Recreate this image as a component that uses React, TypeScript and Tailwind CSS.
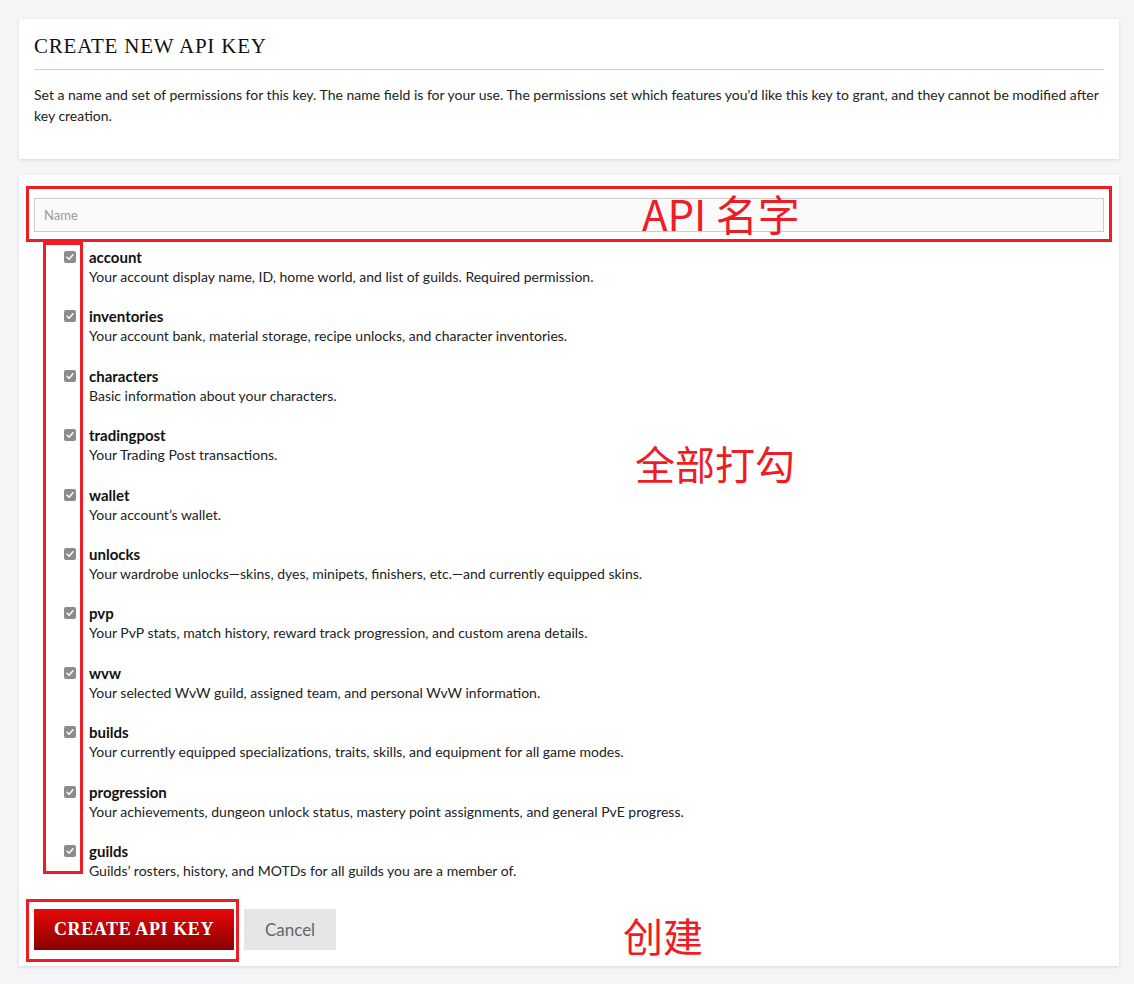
import * as React from "react";

const permissions = [
  { name: "account", desc: "Your account display name, ID, home world, and list of guilds. Required permission." },
  { name: "inventories", desc: "Your account bank, material storage, recipe unlocks, and character inventories." },
  { name: "characters", desc: "Basic information about your characters." },
  { name: "tradingpost", desc: "Your Trading Post transactions." },
  { name: "wallet", desc: "Your account\u2019s wallet." },
  { name: "unlocks", desc: "Your wardrobe unlocks\u2014skins, dyes, minipets, finishers, etc.\u2014and currently equipped skins." },
  { name: "pvp", desc: "Your PvP stats, match history, reward track progression, and custom arena details." },
  { name: "wvw", desc: "Your selected WvW guild, assigned team, and personal WvW information." },
  { name: "builds", desc: "Your currently equipped specializations, traits, skills, and equipment for all game modes." },
  { name: "progression", desc: "Your achievements, dungeon unlock status, mastery point assignments, and general PvE progress." },
  { name: "guilds", desc: "Guilds\u2019 rosters, history, and MOTDs for all guilds you are a member of." },
];

function Check() {
  return (
    <span className="mt-[4px] flex h-[12px] w-[12px] shrink-0 items-center justify-center rounded-[2px] bg-[#8c8c8c]">
      <svg viewBox="0 0 12 12" className="h-[10px] w-[10px]">
        <path d="M2.5 6.2 L5 8.6 L9.5 3.4" fill="none" stroke="#fff" strokeWidth="1.8" strokeLinecap="round" strokeLinejoin="round" />
      </svg>
    </span>
  );
}

export default function App() {
  const cjk = { fontFamily: '"Noto Sans CJK SC", "Liberation Sans", sans-serif' };

  return (
    <div className="relative min-h-[984px] bg-[#f4f5f6] pl-[19px] pr-[15px] pt-[19px] font-['Lato',sans-serif] text-[#1a1a1a]">
      <div className="bg-white px-[15px] pt-[14px] pb-[33px] shadow-[0_1px_3px_rgba(0,0,0,0.12)]">
        <h1 className="border-b border-[#cfcfcf] pb-[10px] font-['Liberation_Serif',serif] text-[21px] leading-[26px] tracking-[0.8px] text-[#111]">
          CREATE NEW API KEY
        </h1>
        <p className="mt-[14px] text-[14px] leading-[21px] text-[#222]">
          Set a name and set of permissions for this key. The name field is for your use. The permissions set which features you'd like this key to grant, and they cannot be modified after key creation.
        </p>
      </div>

      <div className="mt-[16px] bg-white px-[15px] pt-[23px] pb-[16px] shadow-[0_1px_3px_rgba(0,0,0,0.12)]">
        <input
          type="text"
          placeholder="Name"
          className="block h-[34px] w-full border border-[#cccccc] bg-[#fafafa] px-[9px] text-[13px] text-[#333] outline-none placeholder:text-[#9a9a9a]"
        />

        <div className="mt-[15px] flex flex-col gap-[19.4px] pl-[30px]">
          {permissions.map((p) => (
            <label key={p.name} className="flex gap-[13px]">
              <Check />
              <div className="leading-[20px]">
                <div className="text-[15px] font-bold text-[#111]">{p.name}</div>
                <div className="text-[14px] text-[#222]">{p.desc}</div>
              </div>
            </label>
          ))}
        </div>

        <div className="mt-[28px] flex gap-[10px]">
          <button className="h-[41px] w-[200px] bg-gradient-to-b from-[#ea0a0a] to-[#8a0000] font-['Liberation_Serif',serif] text-[18px] font-bold tracking-[0.6px] text-white">
            CREATE API KEY
          </button>
          <button className="h-[41px] w-[92px] bg-[#e6e6e6] text-[17px] text-[#666]">Cancel</button>
        </div>
      </div>

      {/* annotations */}
      <div className="pointer-events-none absolute left-[26px] top-[186px] h-[56px] w-[1086px] border-[3px] border-[#ee1c25]" />
      <div className="pointer-events-none absolute left-[43px] top-[242px] h-[632px] w-[40px] border-[3px] border-[#ee1c25]" />
      <div className="pointer-events-none absolute left-[26px] top-[899px] h-[63px] w-[213px] border-[3px] border-[#ee1c25]" />
      <div className="pointer-events-none absolute left-[642px] top-[187px] text-[42px] leading-[52px] text-[#ee1c25]" style={cjk}>
        API 名字
      </div>
      <div className="pointer-events-none absolute left-[635px] top-[437px] text-[40px] leading-[52px] text-[#ee1c25]" style={cjk}>
        全部打勾
      </div>
      <div className="pointer-events-none absolute left-[623px] top-[909px] text-[40px] leading-[52px] text-[#ee1c25]" style={cjk}>
        创建
      </div>
    </div>
  );
}
